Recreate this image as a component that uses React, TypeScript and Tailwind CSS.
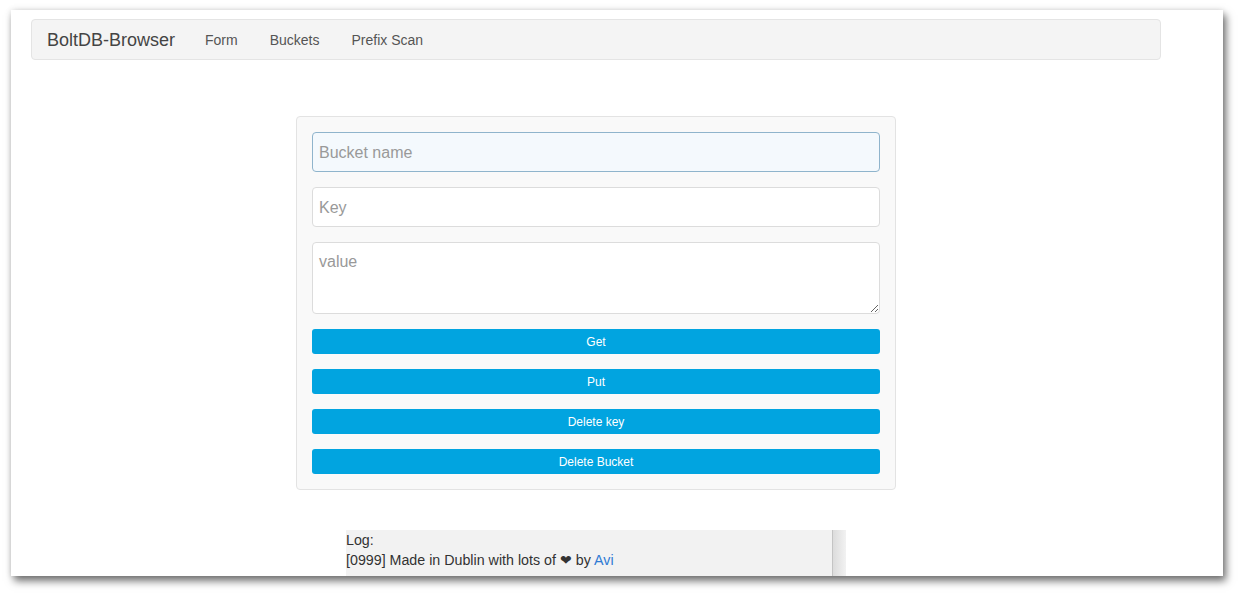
import React from "react";

export default function App() {
  const btn =
    "h-[25px] w-full rounded-[3px] bg-[#01a4e0] text-[12px] text-white flex items-center justify-center";
  return (
    <div className="h-[595px] w-[1242px] bg-white pt-[10px] pl-[11px] font-['Liberation_Sans',Arial,sans-serif]">
      <div className="relative h-[566px] w-[1212px] overflow-hidden bg-white shadow-[3px_5px_8px_rgba(0,0,0,0.55),0_0_6px_rgba(0,0,0,0.12)]">
        <div className="ml-[20px] mt-[9px] flex h-[41px] w-[1130px] items-center rounded-[4px] border border-[#e4e4e4] bg-[#f4f4f4] pt-[2px]">
          <span className="ml-[15px] text-[18px] text-[#444]">BoltDB-Browser</span>
          <span className="ml-[30px] text-[14px] text-[#555]">Form</span>
          <span className="ml-[32px] text-[14px] text-[#555]">Buckets</span>
          <span className="ml-[32px] text-[14px] text-[#555]">Prefix Scan</span>
        </div>

        <div className="ml-[285px] mt-[56px] flex w-[600px] flex-col gap-[15px] rounded-[4px] border border-[#e3e3e3] bg-[#f9f9f9] p-[15px]">
          <input
            placeholder="Bucket name"
            className="h-[40px] w-full rounded-[4px] border border-[#8fb4cc] bg-[#f4f9fd] px-[6px] pt-[2px] text-[16px] text-[#555] outline-none placeholder:text-[#999]"
          />
          <input
            placeholder="Key"
            className="h-[40px] w-full rounded-[4px] border border-[#dcdcdc] bg-white px-[6px] pt-[2px] text-[16px] text-[#555] outline-none placeholder:text-[#999]"
          />
          <textarea
            placeholder="value"
            className="block h-[72px] w-full rounded-[4px] border border-[#dcdcdc] bg-white px-[6px] pt-[9px] text-[16px] leading-[20px] text-[#555] outline-none placeholder:text-[#999]"
          />
          <div className={btn}>Get</div>
          <div className={btn}>Put</div>
          <div className={btn}>Delete key</div>
          <div className={btn}>Delete Bucket</div>
        </div>

        <div className="ml-[335px] mt-[40px] flex h-[60px] w-[500px] bg-[#f2f2f2]">
          <div className="flex-1 text-[14.25px] leading-[20px] text-[#333]">
            <div>Log:</div>
            <div>
              [0999] Made in Dublin with lots of ❤ by{" "}
              <span className="text-[#2f7bd4]">Avi</span>
            </div>
          </div>
          <div className="w-[14px] border-l border-[#c4c4c4] bg-gradient-to-r from-[#dcdcdc] to-[#f2f2f2]" />
        </div>
      </div>
    </div>
  );
}
